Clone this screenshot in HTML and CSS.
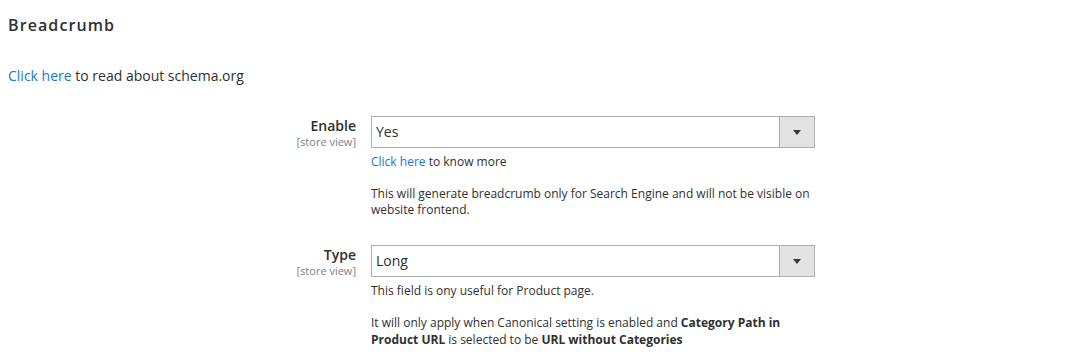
FILE: index.html
```html
<!DOCTYPE html>
<html>
<head>
<meta charset="utf-8">
<link rel="stylesheet" href="styles.css">
</head>
<body>
<div class="page">
  <h2 class="section-title">Breadcrumb</h2>
  <p class="intro"><a class="link" href="#">Click here</a> to read about schema.org</p>

  <div class="field-row">
    <div class="label">
      <span class="label-text">Enable</span>
      <span class="scope">[store view]</span>
    </div>
    <div class="control">
      <div class="select">
        <span class="select-value">Yes</span>
        <span class="select-btn"><span class="caret"></span></span>
      </div>
      <p class="note first"><a class="link" href="#">Click here</a> to know more</p>
      <p class="note">This will generate breadcrumb only for Search Engine and will not be visible on website frontend.</p>
    </div>
  </div>

  <div class="field-row second">
    <div class="label">
      <span class="label-text">Type</span>
      <span class="scope">[store view]</span>
    </div>
    <div class="control">
      <div class="select">
        <span class="select-value">Long</span>
        <span class="select-btn"><span class="caret"></span></span>
      </div>
      <p class="note first tight">This field is ony useful for Product page.</p>
      <p class="note loose">It will only apply when Canonical setting is enabled and <b>Category Path in Product URL</b> is selected to be <b>URL without Categories</b></p>
    </div>
  </div>
</div>
</body>
</html>
```
FILE: styles.css
```css
* { box-sizing: border-box; }
html, body { margin: 0; padding: 0; background: #fff; }
body {
  font-family: "Open Sans", "Liberation Sans", sans-serif;
  color: #303030;
  font-size: 14px;
}
.page { padding: 14px 8px 0 8px; }
.section-title {
  margin: 0;
  font-size: 16px;
  font-weight: 600;
  letter-spacing: 1.1px;
  line-height: 22px;
  color: #303030;
}
.intro {
  margin: 30px 0 0 0;
  line-height: 20px;
}
.link { color: #1979c3; text-decoration: none; }
.field-row {
  display: grid;
  grid-template-columns: 348px 444px;
  column-gap: 15px;
  margin-top: 30px;
}
.field-row.second { margin-top: 27px; }
.label {
  display: flex;
  flex-direction: column;
  align-items: flex-end;
  padding-top: 1px;
}
.label-text {
  font-size: 14px;
  font-weight: 600;
  line-height: 18px;
}
.scope {
  font-size: 11px;
  color: #808080;
  line-height: 13px;
}
.select {
  display: flex;
  height: 32px;
  border: 1px solid #adadad;
  background: #fff;
}
.select-value {
  flex: 1;
  padding: 0 0 0 4px;
  line-height: 30px;
  font-size: 14px;
}
.select-btn {
  width: 35px;
  background: #e3e3e3;
  border-left: 1px solid #adadad;
  display: flex;
  align-items: center;
  justify-content: center;
}
.caret {
  width: 0; height: 0;
  border-left: 4px solid transparent;
  border-right: 4px solid transparent;
  border-top: 5px solid #41362f;
}
.note {
  margin: 16px 0 0 0;
  font-size: 12px;
  line-height: 16px;
}
.note.first { margin-top: 6px; }
.note.tight { margin-top: 6px; }
.note.loose { margin-top: 15px; line-height: 17px; }
.note b { font-weight: 700; }
```
